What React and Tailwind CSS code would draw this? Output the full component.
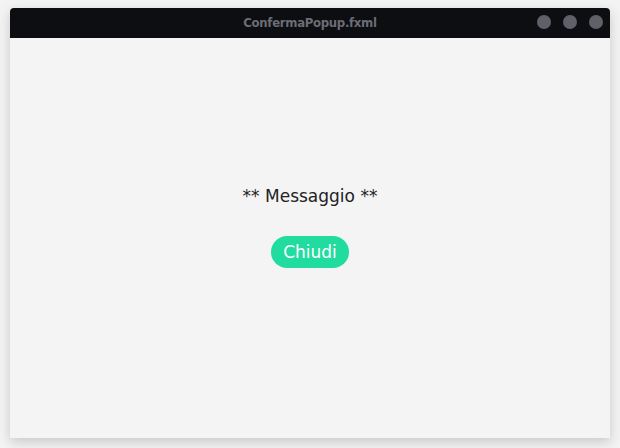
export default function App() {
  return (
    <div className="w-[620px] h-[448px] bg-[#f3f3f3] pt-[8px] px-[10px] overflow-hidden">
      <div className="h-[430px] flex flex-col rounded-t-[4px] overflow-hidden bg-[#f4f4f4] shadow-[0_4px_12px_rgba(0,0,0,0.18)]">
        <div className="h-[30px] shrink-0 bg-[#0d0e12] flex items-center relative">
          <div className="flex-1 text-center text-[13px] font-bold text-[#6b6c75] font-['DejaVu_Sans_Condensed','DejaVu_Sans',sans-serif] tracking-[-0.3px]">
            ConfermaPopup.fxml
          </div>
          <div className="absolute right-[7px] top-[7px] flex gap-[12px]">
            <span className="w-[14px] h-[14px] rounded-full bg-[#5f6068]" />
            <span className="w-[14px] h-[14px] rounded-full bg-[#5f6068]" />
            <span className="w-[14px] h-[14px] rounded-full bg-[#5f6068]" />
          </div>
        </div>
        <div className="flex-1 flex flex-col items-center pt-[148px] font-['DejaVu_Sans',sans-serif]">
          <div className="text-[17px] text-[#222] leading-[20px]">** Messaggio **</div>
          <button className="mt-[30px] h-[32px] px-[12px] rounded-full bg-[#20dc9f] text-white text-[17px] leading-none">
            Chiudi
          </button>
        </div>
      </div>
    </div>
  );
}
